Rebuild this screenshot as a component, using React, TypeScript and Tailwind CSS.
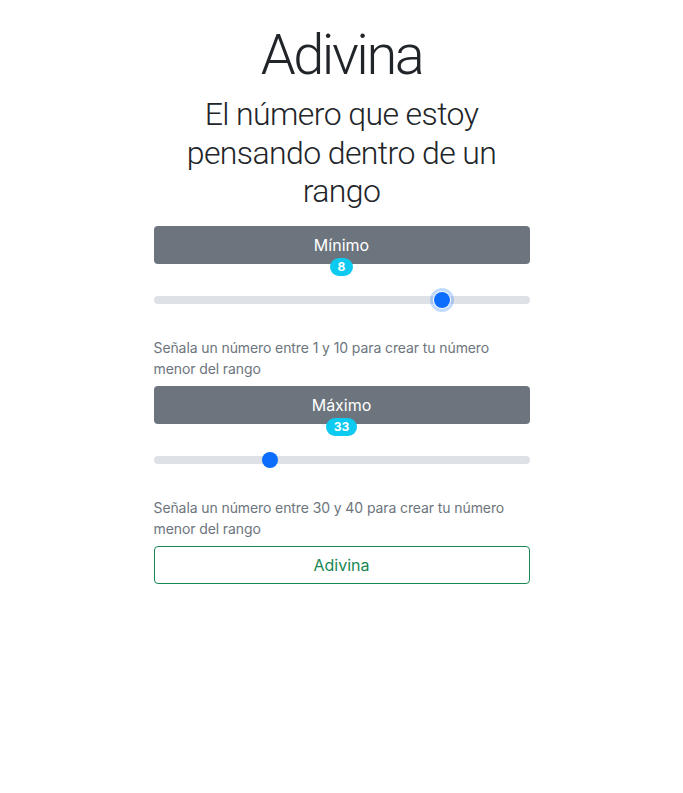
import React, { useState } from "react";

type RangeProps = {
  label: string;
  min: number;
  max: number;
  initial: number;
  focused?: boolean;
  help: string;
};

function RangeField({ label, min, max, initial, focused, help }: RangeProps) {
  const [value, setValue] = useState(initial);

  return (
    <div>
      <div className="h-[38px] rounded-[4px] bg-[#6c757d] flex items-center justify-center text-white text-base">
        {label}
      </div>
      <div className="flex justify-center -mt-[6px]">
        <span className="rounded-full bg-[#0dcaf0] text-white text-[12px] font-bold leading-none px-[8px] py-[3px] h-[18px] flex items-center">
          {value}
        </span>
      </div>
      <input
        type="range"
        min={min}
        max={max}
        value={value}
        onChange={(e) => setValue(Number(e.target.value))}
        className={
          "mt-[12px] block w-full h-6 appearance-none bg-transparent cursor-pointer focus:outline-none " +
          "[&::-webkit-slider-runnable-track]:h-2 [&::-webkit-slider-runnable-track]:rounded-full [&::-webkit-slider-runnable-track]:bg-[#dee2e6] " +
          "[&::-webkit-slider-thumb]:appearance-none [&::-webkit-slider-thumb]:w-4 [&::-webkit-slider-thumb]:h-4 [&::-webkit-slider-thumb]:-mt-1 [&::-webkit-slider-thumb]:rounded-full [&::-webkit-slider-thumb]:bg-[#0d6efd] " +
          (focused
            ? "[&::-webkit-slider-thumb]:shadow-[0_0_0_1px_#fff,0_0_0_4px_rgba(13,110,253,0.25)]"
            : "")
        }
      />
      <p className="mt-[25px] text-[14px] leading-[21px] text-[#6c757d] tracking-[-0.1px]">{help}</p>
    </div>
  );
}

function App() {
  return (
    <div
      className="min-h-screen bg-white text-[#212529]"
      style={{ fontFamily: "Inter, 'Liberation Sans', sans-serif" }}
    >
      <div className="w-[376px] mx-auto pt-[22px]">
        <h1
          className="text-center text-[56px] font-light leading-[1.2] tracking-[-2.5px]"
          style={{ fontFamily: "Roboto, 'Liberation Sans', sans-serif" }}
        >
          Adivina
        </h1>
        <h2
          className="text-center text-[32px] font-light leading-[1.2] tracking-[-0.6px] mt-[6px] mb-[16px]"
          style={{ fontFamily: "Roboto, 'Liberation Sans', sans-serif" }}
        >
          El número que estoy pensando dentro de un rango
        </h2>

        <div className="space-y-[7px]">
          <RangeField
            label="Mínimo"
            min={1}
            max={10}
            initial={8}
            focused
            help="Señala un número entre 1 y 10 para crear tu número menor del rango"
          />
          <RangeField
            label="Máximo"
            min={30}
            max={40}
            initial={33}
            help="Señala un número entre 30 y 40 para crear tu número menor del rango"
          />
          <button className="w-full h-[38px] rounded-[4px] border border-[#198754] text-[#198754] text-base hover:bg-[#198754] hover:text-white">
            Adivina
          </button>
        </div>
      </div>
    </div>
  );
}

export default App;
